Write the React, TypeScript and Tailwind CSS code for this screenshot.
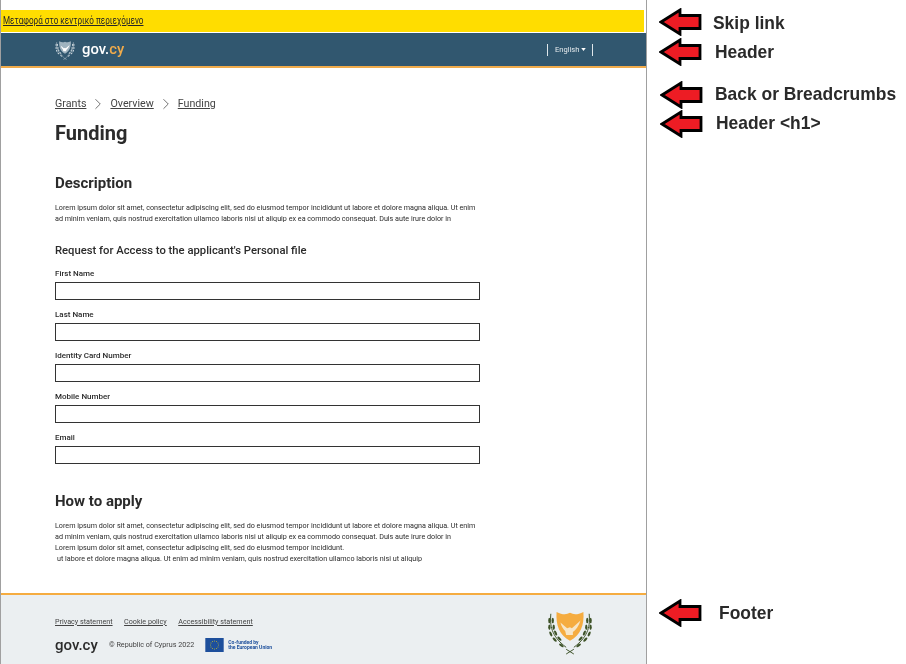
import { ChevronRight } from 'lucide-react';

const LOREM_A =
  'Lorem ipsum dolor sit amet, consectetur adipiscing elit, sed do eiusmod tempor incididunt ut labore et dolore magna aliqua. Ut enim';
const LOREM_B =
  'ad minim veniam, quis nostrud exercitation ullamco laboris nisi ut aliquip ex ea commodo consequat. Duis aute irure dolor in';

const fields = ['First Name', 'Last Name', 'Identity Card Number', 'Mobile Number', 'Email'];

const annotations = [
  { label: 'Skip link', arrowTop: 'top-[8px]', arrowLeft: 'left-[12px]', textTop: 'top-[12px]', textLeft: 'left-[66px]' },
  { label: 'Header', arrowTop: 'top-[38px]', arrowLeft: 'left-[12px]', textTop: 'top-[41px]', textLeft: 'left-[68px]' },
  { label: 'Back or Breadcrumbs', arrowTop: 'top-[81px]', arrowLeft: 'left-[13px]', textTop: 'top-[83px]', textLeft: 'left-[68px]' },
  { label: 'Header <h1>', arrowTop: 'top-[110px]', arrowLeft: 'left-[13px]', textTop: 'top-[112px]', textLeft: 'left-[69px]' },
  { label: 'Footer', arrowTop: 'top-[599px]', arrowLeft: 'left-[12px]', textTop: 'top-[602px]', textLeft: 'left-[72px]' },
];

const Crest = ({ leaf, shield, bird }: { leaf: string; shield: string; bird: string }) => (
  <svg viewBox="0 0 48 48" className="h-full w-full">
    <path d="M10 3 C16 6 20 6 24 4 C28 6 32 6 38 3 C39 17 35 27 24 33 C13 27 9 17 10 3Z" fill={shield} />
    {/* dove with olive branch */}
    <path d="M14 14 L21 20 L24 19 L26 20 L35 12 C33 18 30 22 27 24 L27 27 L20 27 L19 23 C17 21 15 18 14 14Z" fill={bird} />
    <path d="M4 5 C3 17 4 28 20 40 M44 5 C45 17 44 28 28 40" fill="none" stroke={leaf} strokeWidth="1" />
    <g fill={leaf}>
      <ellipse cx="2.5" cy="12" rx="1.2" ry="2.8" />
      <ellipse cx="6" cy="12" rx="1.2" ry="2.8" />
      <ellipse cx="2.5" cy="19" rx="1.2" ry="2.8" />
      <ellipse cx="7" cy="19" rx="1.2" ry="2.8" />
      <ellipse cx="4" cy="26" rx="1.2" ry="2.8" transform="rotate(-25 4 26)" />
      <ellipse cx="9" cy="25" rx="1.2" ry="2.8" transform="rotate(-25 9 25)" />
      <ellipse cx="8" cy="32" rx="1.2" ry="2.8" transform="rotate(-45 8 32)" />
      <ellipse cx="13" cy="31" rx="1.2" ry="2.8" transform="rotate(-45 13 31)" />
      <ellipse cx="15" cy="38" rx="1.2" ry="2.8" transform="rotate(-55 15 38)" />
      <ellipse cx="45.5" cy="12" rx="1.2" ry="2.8" />
      <ellipse cx="42" cy="12" rx="1.2" ry="2.8" />
      <ellipse cx="45.5" cy="19" rx="1.2" ry="2.8" />
      <ellipse cx="41" cy="19" rx="1.2" ry="2.8" />
      <ellipse cx="44" cy="26" rx="1.2" ry="2.8" transform="rotate(25 44 26)" />
      <ellipse cx="39" cy="25" rx="1.2" ry="2.8" transform="rotate(25 39 25)" />
      <ellipse cx="40" cy="32" rx="1.2" ry="2.8" transform="rotate(45 40 32)" />
      <ellipse cx="35" cy="31" rx="1.2" ry="2.8" transform="rotate(45 35 31)" />
      <ellipse cx="33" cy="38" rx="1.2" ry="2.8" transform="rotate(55 33 38)" />
    </g>
    <path d="M20 42 L28 47 M28 42 L20 47" stroke={leaf} strokeWidth="1" />
  </svg>
);

const EuFlag = () => (
  <svg viewBox="0 0 21 16" className="h-[14px] w-[21px]">
    <rect width="21" height="16" fill="#1d4f9c" />
    {[0, 30, 60, 90, 120, 150, 180, 210, 240, 270, 300, 330].map((a) => (
      <circle
        key={a}
        cx={10.5 + 4.6 * Math.cos((a * Math.PI) / 180)}
        cy={8 + 4.6 * Math.sin((a * Math.PI) / 180)}
        r="0.55"
        fill="#ffdd00"
      />
    ))}
  </svg>
);

const Arrow = () => (
  <svg viewBox="0 0 43 28" className="h-[28px] w-[43px]">
    <path
      d="M2 14 L21 2 L21 7.5 L41 7.5 L41 20.5 L21 20.5 L21 26Z"
      fill="#ed1c24"
      stroke="#000000"
      strokeWidth="2.8"
      strokeLinejoin="miter"
    />
  </svg>
);

const App = () => {
  return (
    <div className="flex h-[664px] w-[906px] overflow-hidden bg-white font-['Roboto',sans-serif] text-[#2b2b2b] blur-[0.3px]">
      {/* Page mock */}
      <div className="flex h-full w-[647px] shrink-0 flex-col border-x border-[#a0a0a0]">
        <div className="mt-[10px] mr-[2px] flex h-[22px] items-center bg-[#ffdd00] pl-[2px]">
          <a className="origin-left scale-x-[0.775] text-[10.5px] whitespace-nowrap text-[#272727] underline">
            Μεταφορά στο κεντρικό περιεχόμενο
          </a>
        </div>

        {/* Header */}
        <header className="mt-px flex h-[35px] items-center justify-between border-b-2 border-[#f0ab4b] bg-[#31576f] pr-[53px] pl-[54px]">
          <div className="flex items-center gap-[7px]">
            <div className="h-[20px] w-[20px]">
              <Crest leaf="#d5dee3" shield="#9fb3bf" bird="#ffffff" />
            </div>
            <span className="text-[14.8px] leading-none font-medium text-white">
              gov.<span className="text-[#f0ab4b]">cy</span>
            </span>
          </div>
          <div className="flex h-[12px] w-[46px] items-center gap-[2px] border-x border-[#dfe6ea] pl-[7px] text-[7.5px] whitespace-nowrap text-[#e6ebee]">
            English
            <svg viewBox="0 0 6 4" className="h-[3px] w-[5px]">
              <path d="M0 0 H6 L3 4Z" fill="#ffffff" />
            </svg>
          </div>
        </header>

        {/* Main */}
        <main className="flex-1 pt-[29px] pl-[54px]">
          <nav className="flex h-[14px] items-center text-[10.7px] text-[#444444]">
            <a className="underline">Grants</a>
            <ChevronRight className="mx-[3px] h-[18px] w-[18px]" strokeWidth={1} />
            <a className="underline">Overview</a>
            <ChevronRight className="mx-[3px] h-[18px] w-[18px]" strokeWidth={1} />
            <a className="underline">Funding</a>
          </nav>
          <h1 className="mt-[10px] text-[20px] leading-[24px] font-bold">Funding</h1>
          <h2 className="mt-[29px] text-[15px] leading-[18px] font-bold">Description</h2>
          <p className="mt-[10px] w-[425px] text-[7.2px] leading-[11px] whitespace-nowrap">
            {LOREM_A}
            <br />
            {LOREM_B}
          </p>
          <h3 className="mt-[20px] text-[11.25px] leading-[14px] font-medium">
            Request for Access to the applicant's Personal file
          </h3>
          <form className="mt-[10px] flex w-[425px] flex-col gap-[9px]">
            {fields.map((f) => (
              <div key={f} className="flex flex-col">
                <label className="mb-[3px] text-[8px] leading-[11px] font-medium">{f}</label>
                <input className="h-[18px] w-full border border-[#333333] bg-white" />
              </div>
            ))}
          </form>
          <h2 className="mt-[28px] text-[15px] leading-[18px] font-bold">How to apply</h2>
          <p className="mt-[10px] w-[425px] text-[7.2px] leading-[11px] whitespace-nowrap">
            {LOREM_A}
            <br />
            {LOREM_B}
            <br />
            Lorem ipsum dolor sit amet, consectetur adipiscing elit, sed do eiusmod tempor incididunt.
            <br />
            <span className="pl-[2px]">
              ut labore et dolore magna aliqua. Ut enim ad minim veniam, quis nostrud exercitation ullamco laboris nisi ut aliquip
            </span>
          </p>
        </main>

        {/* Footer */}
        <footer className="flex h-[71px] justify-between border-t-2 border-[#f5ac40] bg-[#ebeff1] pr-[53px] pl-[54px]">
          <div className="flex flex-col pt-[22px]">
            <div className="flex gap-[11.5px] text-[7.2px] leading-[10px] text-[#444444]">
              <a className="underline">Privacy statement</a>
              <a className="underline">Cookie policy</a>
              <a className="underline">Accessibility statement</a>
            </div>
            <div className="mt-[9px] flex items-center">
              <span className="w-[54px] text-[15px] leading-[18px] font-medium">gov.cy</span>
              <span className="text-[7.2px] text-[#444444]">© Republic of Cyprus 2022</span>
              <div className="ml-[10px] flex items-center gap-[3px]">
                <EuFlag />
                <span className="text-[5px] leading-[5.5px] font-bold whitespace-nowrap text-[#1d4f9c]">
                  Co-funded by
                  <br />
                  the European Union
                </span>
              </div>
            </div>
          </div>
          <div className="mt-[14px] h-[46px] w-[46px]">
            <Crest leaf="#3d5227" shield="#f5ac40" bird="#f7e6c8" />
          </div>
        </footer>
      </div>

      {/* Annotations placed on the free canvas */}
      <div className="relative h-full flex-1">
        {annotations.map((a) => (
          <div key={a.label}>
            <div className={`absolute ${a.arrowTop} ${a.arrowLeft}`}>
              <Arrow />
            </div>
            <span
              className={`absolute ${a.textTop} ${a.textLeft} origin-left scale-x-[0.917] font-['Liberation_Sans',sans-serif] text-[19px] leading-[22px] font-bold whitespace-nowrap text-[#2a2a2a]`}
            >
              {a.label}
            </span>
          </div>
        ))}
      </div>
    </div>
  );
};

export default App;
